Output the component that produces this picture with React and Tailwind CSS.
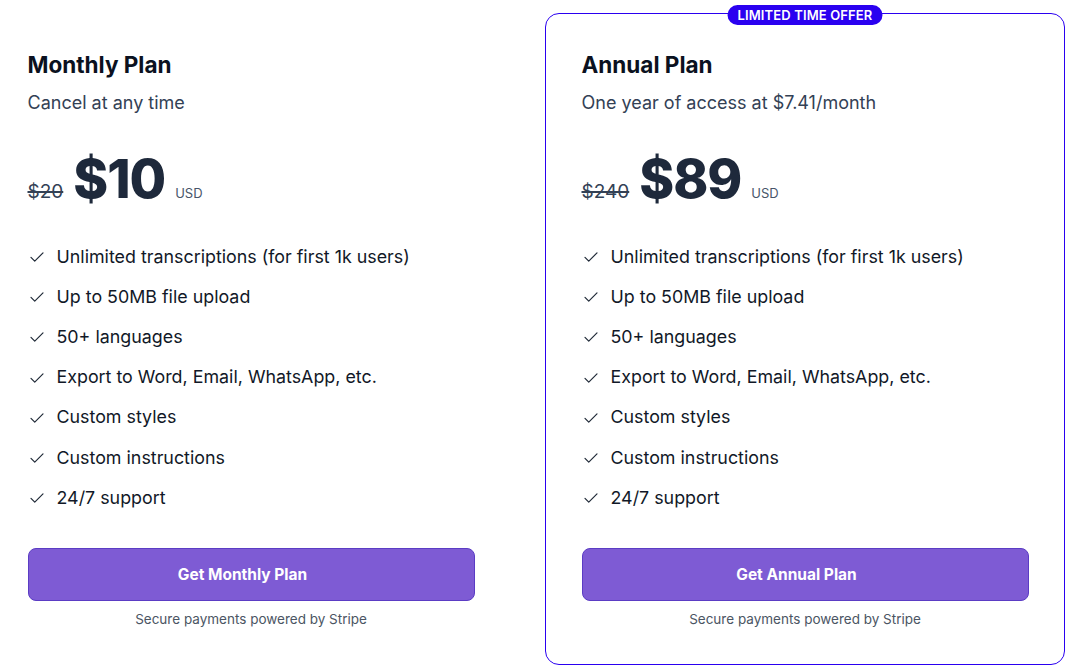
import React from "react";

const features = [
  "Unlimited transcriptions (for first 1k users)",
  "Up to 50MB file upload",
  "50+ languages",
  "Export to Word, Email, WhatsApp, etc.",
  "Custom styles",
  "Custom instructions",
  "24/7 support",
];

function Check() {
  return (
    <svg width="18" height="18" viewBox="0 0 24 24" fill="none" stroke="#1f2937" strokeWidth="1.6" strokeLinecap="round" strokeLinejoin="round">
      <path d="M4 12.5l5 5L20 6.5" />
    </svg>
  );
}

function PlanCard({ title, subtitle, oldPrice, price, cta, featured }) {
  return (
    <div
      className={
        "relative w-[520px] shrink-0 rounded-[14px] px-[35.5px] pt-[36px] pb-[35px] " +
        (featured ? "border-[1.5px] border-[#2a00f0]" : "border-[1.5px] border-transparent")
      }
    >
      {featured && (
        <div className="absolute left-1/2 top-[-9px] -translate-x-1/2 rounded-full bg-[#2a00f0] px-[10px] h-[20px] flex items-center text-[13px] font-semibold leading-none tracking-[0.01em] text-white whitespace-nowrap">
          LIMITED TIME OFFER
        </div>
      )}
      <h2 className="text-[22.5px] leading-[30px] font-bold text-[#0b1120]">{title}</h2>
      <p className="mt-[11px] text-[18px] leading-[24px] text-[#334155]">{subtitle}</p>
      <div className="mt-[33px] flex items-baseline">
        <span className="text-[19px] text-[#334155] line-through decoration-[1.5px]">{oldPrice}</span>
        <span className="ml-[10px] text-[53px] leading-[62px] font-extrabold tracking-[-0.02em] text-[#1e293b]">{price}</span>
        <span className="ml-[10px] text-[13px] text-[#475569]">USD</span>
      </div>
      <ul className="mt-[27px] flex flex-col">
        {features.map((f) => (
          <li key={f} className="flex items-center h-[40.2px]">
            <span className="w-[29px] flex items-center"><Check /></span>
            <span className="text-[17.85px] text-[#111827]">{f}</span>
          </li>
        ))}
      </ul>
      <button className="mt-[30px] w-full h-[53px] rounded-[8px] bg-[#7e5bd4] border border-[#5b3cc4] pr-[17px] text-white text-[15.5px] font-bold">
        {cta}
      </button>
      <p className="mt-[8px] text-center text-[13.5px] leading-[20px] text-[#4b5563]">Secure payments powered by Stripe</p>
    </div>
  );
}

export default function App() {
  return (
    <div
      className="w-[1070px] h-[668px] overflow-hidden bg-white"
      style={{ fontFamily: "Inter, 'Noto Sans', sans-serif" }}
    >
      <div className="ml-[-9px] mt-[13px] flex gap-[34px]">
        <PlanCard
          title="Monthly Plan"
          subtitle="Cancel at any time"
          oldPrice="$20"
          price="$10"
          cta="Get Monthly Plan"
        />
        <PlanCard
          featured
          title="Annual Plan"
          subtitle="One year of access at $7.41/month"
          oldPrice="$240"
          price="$89"
          cta="Get Annual Plan"
        />
      </div>
    </div>
  );
}
